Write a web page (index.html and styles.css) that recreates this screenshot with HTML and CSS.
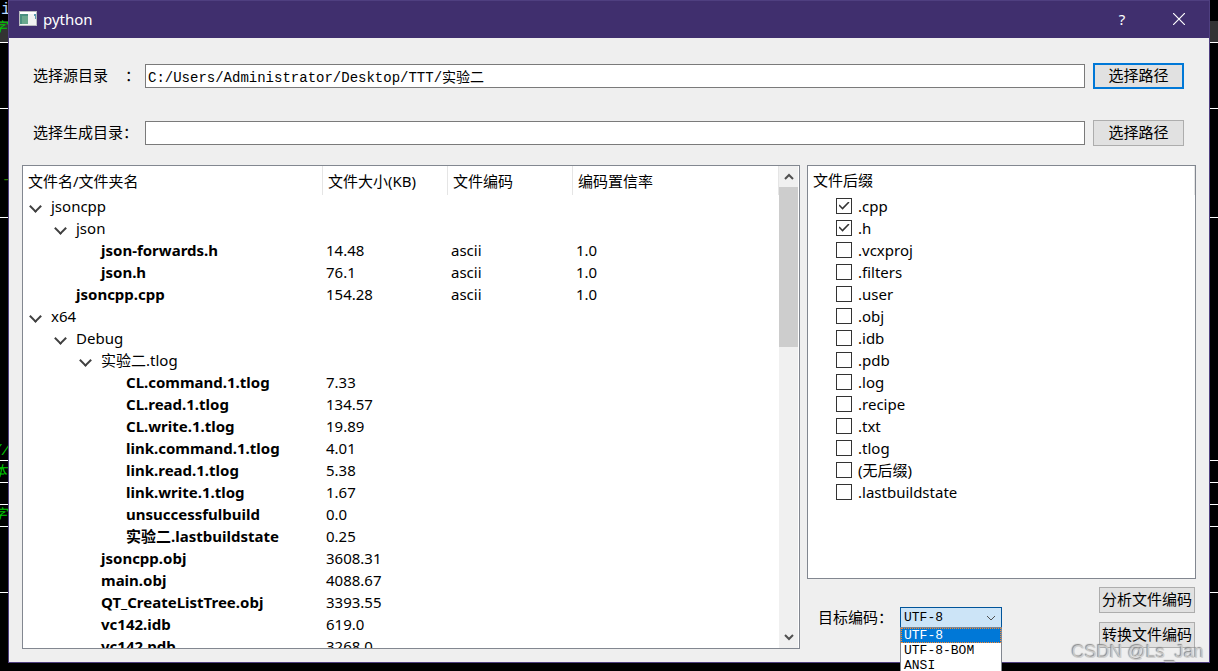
FILE: index.html
```
<!DOCTYPE html>
<html lang="zh-CN">
<head>
<meta charset="utf-8">
<title>python</title>
<link rel="stylesheet" href="styles.css">
</head>
<body>
<div class="desktop">
  <div class="editor" aria-hidden="true">
    <span class="code code-plain" style="top:0px">i</span>
    <span class="band"></span>
    <span class="code" style="top:18px">字</span>
    <span class="rule" style="top:42px"></span>
    <span class="rule" style="top:108px"></span>
    <span class="code code-dash" style="top:170px">-</span>
    <span class="rule" style="top:217px"></span>
    <span class="code" style="top:441px">//</span>
    <span class="rule" style="top:460px"></span>
    <span class="code" style="top:462px">本</span>
    <span class="rule" style="top:482px"></span>
    <span class="rule" style="top:504px"></span>
    <span class="code" style="top:505px">字</span>
    <span class="rule" style="top:526px"></span>
    <span class="rule" style="top:592px"></span>
  </div>

  <main class="window">
    <header class="titlebar">
      <svg class="app-icon" viewBox="0 0 18 15"><path fill="#b9bcc0" d="M0 0h18v15H0z"/><path fill="#fff" d="M1 1h16v2H1z"/><path fill="#f1f3f2" d="M1 3h16v11H1z"/><path fill="#4a9180" d="M1 3h8v10H1z"/><path fill="#6aa88d" d="M3 5h6v8H3z"/><path fill="#5a9bb0" d="M15 3h2v5h-1V5h-1z"/></svg>
      <h1 class="title">python</h1>
      <button class="caption-btn" aria-label="帮助">?</button>
      <button class="caption-btn close" aria-label="关闭"><svg viewBox="0 0 12 12" width="12" height="12"><path d="M0 0l12 12M12 0L0 12" stroke="#fff" stroke-width="1.2"/></svg></button>
    </header>

    <form class="paths">
      <label class="path-label spread" for="src"><span>选择源目录</span><span>：</span></label>
      <input class="path-input" id="src" type="text" value="C:/Users/Administrator/Desktop/TTT/实验二">
      <button class="btn focused" type="button">选择路径</button>
      <label class="path-label" for="dst">选择生成目录：</label>
      <input class="path-input" id="dst" type="text">
      <button class="btn" type="button">选择路径</button>
    </form>

    <div class="content">
      <section class="panel files">
        <div class="files-view">
          <table class="tree">
            <colgroup><col class="col-name"><col class="col-mid"><col class="col-mid"><col></colgroup>
            <thead><tr><th>文件名/文件夹名</th><th>文件大小(KB)</th><th>文件编码</th><th>编码置信率</th></tr></thead>
            <tbody>
              <tr><td class="dir l0"><button class="toggle" aria-label="折叠"></button>jsoncpp</td><td></td><td></td><td></td></tr>
              <tr><td class="dir l1"><button class="toggle" aria-label="折叠"></button>json</td><td></td><td></td><td></td></tr>
              <tr><td class="leaf l2">json-forwards.h</td><td>14.48</td><td>ascii</td><td>1.0</td></tr>
              <tr><td class="leaf l2">json.h</td><td>76.1</td><td>ascii</td><td>1.0</td></tr>
              <tr><td class="leaf l1">jsoncpp.cpp</td><td>154.28</td><td>ascii</td><td>1.0</td></tr>
              <tr><td class="dir l0"><button class="toggle" aria-label="折叠"></button>x64</td><td></td><td></td><td></td></tr>
              <tr><td class="dir l1"><button class="toggle" aria-label="折叠"></button>Debug</td><td></td><td></td><td></td></tr>
              <tr><td class="dir l2"><button class="toggle" aria-label="折叠"></button>实验二.tlog</td><td></td><td></td><td></td></tr>
              <tr><td class="leaf l3">CL.command.1.tlog</td><td>7.33</td><td></td><td></td></tr>
              <tr><td class="leaf l3">CL.read.1.tlog</td><td>134.57</td><td></td><td></td></tr>
              <tr><td class="leaf l3">CL.write.1.tlog</td><td>19.89</td><td></td><td></td></tr>
              <tr><td class="leaf l3">link.command.1.tlog</td><td>4.01</td><td></td><td></td></tr>
              <tr><td class="leaf l3">link.read.1.tlog</td><td>5.38</td><td></td><td></td></tr>
              <tr><td class="leaf l3">link.write.1.tlog</td><td>1.67</td><td></td><td></td></tr>
              <tr><td class="leaf l3">unsuccessfulbuild</td><td>0.0</td><td></td><td></td></tr>
              <tr><td class="leaf l3">实验二.lastbuildstate</td><td>0.25</td><td></td><td></td></tr>
              <tr><td class="leaf l2">jsoncpp.obj</td><td>3608.31</td><td></td><td></td></tr>
              <tr><td class="leaf l2">main.obj</td><td>4088.67</td><td></td><td></td></tr>
              <tr><td class="leaf l2">QT_CreateListTree.obj</td><td>3393.55</td><td></td><td></td></tr>
              <tr><td class="leaf l2">vc142.idb</td><td>619.0</td><td></td><td></td></tr>
              <tr><td class="leaf l2">vc142.pdb</td><td>3268.0</td><td></td><td></td></tr>
            </tbody>
          </table>
        </div>
        <div class="scrollbar">
          <button class="scroll-btn" aria-label="向上"><svg viewBox="0 0 10 7" width="10" height="7"><path d="M1 6l4-4 4 4" fill="none" stroke="#505050" stroke-width="2"/></svg></button>
          <div class="scroll-track"><div class="scroll-thumb"></div></div>
          <button class="scroll-btn" aria-label="向下"><svg viewBox="0 0 10 7" width="10" height="7"><path d="M1 1l4 4 4-4" fill="none" stroke="#505050" stroke-width="2"/></svg></button>
        </div>
      </section>

      <div class="side">
        <section class="panel suffixes">
          <h2 class="suffix-head">文件后缀</h2>
          <label class="check"><input type="checkbox" checked>.cpp</label>
          <label class="check"><input type="checkbox" checked>.h</label>
          <label class="check"><input type="checkbox">.vcxproj</label>
          <label class="check"><input type="checkbox">.filters</label>
          <label class="check"><input type="checkbox">.user</label>
          <label class="check"><input type="checkbox">.obj</label>
          <label class="check"><input type="checkbox">.idb</label>
          <label class="check"><input type="checkbox">.pdb</label>
          <label class="check"><input type="checkbox">.log</label>
          <label class="check"><input type="checkbox">.recipe</label>
          <label class="check"><input type="checkbox">.txt</label>
          <label class="check"><input type="checkbox">.tlog</label>
          <label class="check"><input type="checkbox">(无后缀)</label>
          <label class="check"><input type="checkbox">.lastbuildstate</label>
        </section>
        <div class="actions">
          <label class="target-label" for="enc">目标编码：</label>
          <div class="combo">
            <select class="combo-select" id="enc"><option>UTF-8</option><option>UTF-8-BOM</option><option>ANSI</option></select>
            <svg class="combo-arrow" viewBox="0 0 10 6" width="10" height="6"><path d="M1 1l4 4 4-4" fill="none" stroke="#505050"/></svg>
            <ul class="combo-list" role="listbox" aria-label="目标编码">
              <li class="combo-item selected" role="option" aria-selected="true">UTF-8</li>
              <li class="combo-item" role="option">UTF-8-BOM</li>
              <li class="combo-item" role="option">ANSI</li>
            </ul>
          </div>
          <div class="action-btns">
            <button class="btn">分析文件编码</button>
            <button class="btn">转换文件编码</button>
          </div>
        </div>
      </div>
    </div>
  </main>
  <div class="watermark">CSDN @Ls_Jan</div>
</div>
</body>
</html>
```
FILE: styles.css
```
* { box-sizing: border-box; }
body {
  margin: 0;
  background: #000;
  color: #000;
  font: 15px/22px "Noto Sans", "Noto Sans CJK SC", sans-serif;
}
button, input, select { font: inherit; color: inherit; margin: 0; border-radius: 0; }
h1, h2, ul { margin: 0; padding: 0; font: inherit; list-style: none; }

.desktop {
  position: relative;
  display: flex;
  height: 100vh;
  padding: 0 8px 8px;
  overflow: hidden;
}
.editor { position: absolute; inset: 0; overflow: hidden; }
.rule { position: absolute; left: 0; right: 0; height: 1px; background: #fff; }
.band { position: absolute; left: 0; right: 0; top: 21px; height: 21px; background: #333; }
.code {
  position: absolute;
  left: -7px;
  color: #00c800;
  font: italic 14px/20px "Liberation Mono", "Noto Sans CJK SC", monospace;
}
.code-plain { left: 1px; color: #b8d8ff; font-size: 16px; font-style: normal; }
.code-dash { left: 2px; color: #2f7d00; }

.window {
  position: relative;
  flex: 1;
  min-width: 0;
  display: flex;
  flex-direction: column;
  background: #efefef;
  border: 1px solid #4f3f80;
}
.titlebar {
  display: flex;
  align-items: center;
  height: 37px;
  padding: 0 0 2px 10px;
  background: #402f6e;
  color: #fff;
}
.app-icon { width: 18px; height: 15px; }
.title { flex: 1; padding-left: 6px; }
.caption-btn {
  display: flex;
  align-items: center;
  justify-content: center;
  width: 54px;
  height: 35px;
  padding: 0;
  border: 0;
  background: none;
}
.caption-btn.close { width: 60px; }

.paths {
  display: grid;
  grid-template-columns: 112px 1fr 99px;
  align-items: center;
  row-gap: 31px;
  padding: 25px 25px 19px 24px;
}
.path-label, .btn, .target-label { font-family: "Noto Sans CJK SC", sans-serif; }
.path-label { line-height: 20px; padding-bottom: 2px; }
.path-label.spread { display: flex; justify-content: space-between; padding-right: 5px; }
.path-input {
  width: 100%;
  height: 24px;
  padding: 0 2px;
  border: 1px solid #7a7a7a;
  background: #fff;
  font: 14px "Liberation Mono", "Noto Sans CJK SC", monospace;
}
.btn {
  height: 26px;
  padding: 0 2px 2px;
  border: 1px solid #adadad;
  background: #e1e1e1;
  line-height: 22px;
}
.paths .btn { margin-left: 8px; }
.btn.focused { border: 2px solid #0078d7; line-height: 20px; }

.content { flex: 1; min-height: 0; display: flex; gap: 7px; padding: 0 13px; margin-bottom: 13px; }
.panel { background: #fff; border: 1px solid #828790; }
.files { flex: 2 1 0; min-width: 0; display: flex; overflow: hidden; }
.files-view { flex: 1; min-width: 0; overflow: hidden; }
.tree { width: 100%; table-layout: fixed; border-collapse: separate; border-spacing: 0; }
.col-name { width: 300px; }
.col-mid { width: 125px; }
.tree th {
  height: 29px;
  padding: 0 5px;
  border-right: 1px solid #e5e5e5;
  text-align: left;
  font-weight: 400;
}
.tree td { height: 22px; padding: 0 3px; white-space: nowrap; }
.tree .leaf { font-weight: 700; }
.tree .leaf.l1 { padding-left: 53px; }
.tree .leaf.l2 { padding-left: 78px; }
.tree .leaf.l3 { padding-left: 103px; }
.tree .dir.l1 { padding-left: 28px; }
.tree .dir.l2 { padding-left: 53px; }
.toggle {
  display: inline-flex;
  width: 25px;
  height: 12px;
  padding: 0 0 0 5px;
  border: 0;
  background: none;
  vertical-align: 1px;
}
.toggle::before {
  content: "";
  width: 7px;
  height: 7px;
  border: solid #404040;
  border-width: 0 2px 2px 0;
  transform: rotate(45deg);
}

.scrollbar { width: 20px; display: flex; flex-direction: column; background: #f0f0f0; border-right: 1px solid #fff; }
.scroll-btn {
  display: flex;
  align-items: center;
  justify-content: center;
  height: 21px;
  padding: 0;
  border: 0;
  background: none;
}
.scroll-track { flex: 1; }
.scroll-thumb { height: 160px; background: #cdcdcd; }

.side { flex: 1 1 1px; min-width: 0; display: flex; flex-direction: column; }
.suffixes { flex: 1; min-height: 0; overflow: hidden; }
.suffix-head { height: 29px; padding-left: 5px; line-height: 29px; border-right: 1px solid #e5e5e5; }
.check { display: flex; align-items: center; gap: 6px; height: 22px; padding-left: 28px; }
.check input {
  appearance: none;
  width: 16px;
  height: 16px;
  border: 1px solid #333;
  background: #fff;
  display: grid;
  place-items: center;
}
.check input:checked::before {
  content: "";
  width: 11px;
  height: 9px;
  background: #333;
  clip-path: polygon(0 45%, 10% 33%, 36% 67%, 90% 0, 100% 10%, 37% 92%);
}

.actions { display: flex; align-items: center; padding: 8px 1px 1px 11px; }
.target-label { width: 82px; line-height: 20px; padding-bottom: 2px; white-space: nowrap; }
.combo { position: relative; width: 102px; height: 21px; font: 13px/15px "Liberation Mono", monospace; }
.combo-select {
  appearance: none;
  display: block;
  width: 100%;
  height: 21px;
  padding: 0 3px;
  border: 1px solid #00549a;
  background: #cce4f7;
}
.combo-arrow { position: absolute; right: 6px; top: 8px; pointer-events: none; }
.combo-list {
  position: absolute;
  z-index: 2;
  top: 20px;
  left: 0;
  width: 100%;
  padding-bottom: 8px;
  border: 1px solid #828790;
  background: #fff;
}
.combo-item { height: 15px; padding: 0 3px; font: 13px/16px "Liberation Mono", monospace; }
.combo-item.selected { padding: 0 2px; border: 1px dotted #ff8728; background: #0078d7; color: #fff; line-height: 14px; }
.action-btns { display: flex; flex-direction: column; gap: 9px; margin-left: auto; }

.watermark {
  position: absolute;
  right: 14px;
  bottom: 7px;
  color: rgba(205, 205, 205, 0.9);
  text-shadow: -1px -1px 1px #888;
  font: 18px/24px "Liberation Sans", sans-serif;
}
```
